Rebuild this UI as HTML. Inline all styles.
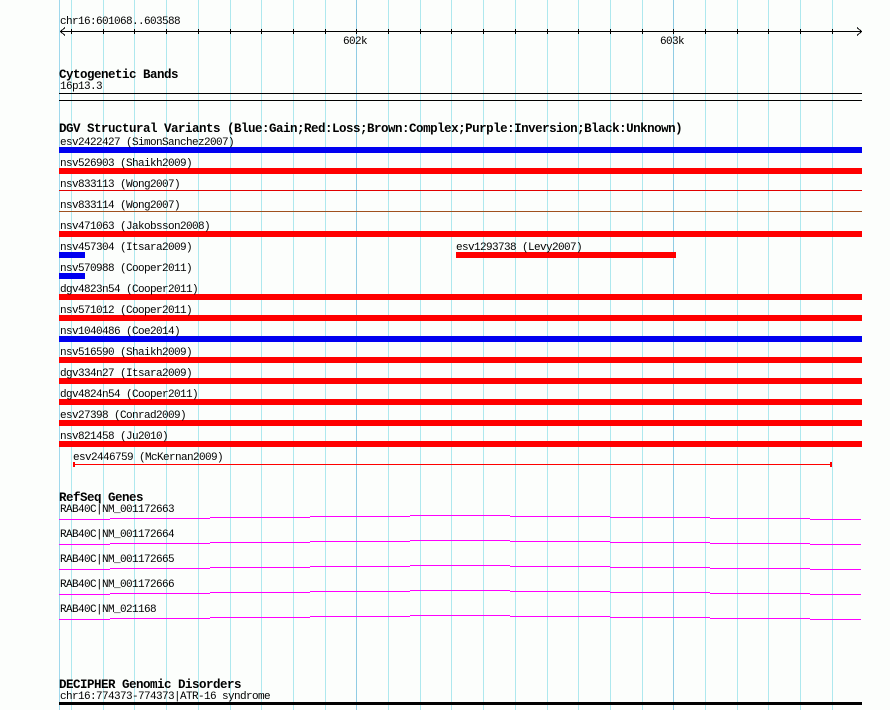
<!DOCTYPE html>
<html><head><meta charset="utf-8"><style>
html,body{margin:0;padding:0;background:#fcfefc;}
body{width:890px;height:710px;position:relative;overflow:hidden;font-family:"Liberation Mono",monospace;}
.t{position:absolute;font-size:11px;line-height:10px;color:#000;white-space:pre;letter-spacing:-0.6px;margin-top:2px;}
.b{position:absolute;font-size:12.5px;line-height:12px;font-weight:bold;color:#000;white-space:pre;letter-spacing:-0.5px;margin-top:2px;}
</style></head><body>
<svg width="890" height="710" style="position:absolute;left:0;top:0" shape-rendering="crispEdges">
<g id="grid" stroke="#aee8ee" stroke-width="1">
<line x1="59.5" y1="0" x2="59.5" y2="710" stroke="#a0d8ec"/>
</g>
<g stroke="#000" stroke-width="1">
<line x1="60" y1="31.5" x2="862" y2="31.5"/>
<polyline points="65,27.5 60.5,31.5 65,35.5" fill="none"/>
<polyline points="857,27.5 861.5,31.5 857,35.5" fill="none"/>
<line x1="59" y1="93.5" x2="862" y2="93.5"/>
<line x1="59" y1="100.5" x2="862" y2="100.5"/>
</g>
<g id="ticks" stroke="#000"></g>
<g id="genes" fill="none" stroke="#f0f" stroke-width="1"></g>
<g>
<rect x="59" y="147" width="803" height="6" fill="#0000f0"/>
<rect x="59" y="168" width="803" height="6" fill="#f00"/>
<rect x="59" y="190" width="803" height="1" fill="#e00000"/>
<rect x="59" y="211" width="803" height="1" fill="#a0501e"/>
<rect x="59" y="231" width="803" height="6" fill="#f00"/>
<rect x="59" y="252" width="26" height="6" fill="#0000f0"/>
<rect x="456" y="252" width="220" height="6" fill="#f00"/>
<rect x="59" y="273" width="26" height="6" fill="#0000f0"/>
<rect x="59" y="294" width="803" height="6" fill="#f00"/>
<rect x="59" y="315" width="803" height="6" fill="#f00"/>
<rect x="59" y="336" width="803" height="6" fill="#0000f0"/>
<rect x="59" y="357" width="803" height="6" fill="#f00"/>
<rect x="59" y="378" width="803" height="6" fill="#f00"/>
<rect x="59" y="399" width="803" height="6" fill="#f00"/>
<rect x="59" y="420" width="803" height="6" fill="#f00"/>
<rect x="59" y="441" width="803" height="6" fill="#f00"/>
<rect x="73" y="464" width="758" height="1" fill="#f00"/>
<rect x="73" y="462" width="2" height="5" fill="#f00"/>
<rect x="830" y="462" width="2" height="5" fill="#f00"/>
<rect x="59" y="702" width="803" height="3" fill="#000"/>
</g>
</svg>
<div class="t" style="left:60px;top:15px">chr16:601068..603588</div>
<div class="t" style="left:343px;top:35px">602k</div>
<div class="t" style="left:660px;top:35px">603k</div>
<div class="b" style="left:59px;top:67px">Cytogenetic Bands</div>
<div class="t" style="left:60px;top:80px">16p13.3</div>
<div class="b" style="left:59px;top:121px">DGV Structural Variants (Blue:Gain;Red:Loss;Brown:Complex;Purple:Inversion;Black:Unknown)</div>
<div class="t" style="left:60px;top:136px">esv2422427 (SimonSanchez2007)</div>
<div class="t" style="left:60px;top:157px">nsv526903 (Shaikh2009)</div>
<div class="t" style="left:60px;top:178px">nsv833113 (Wong2007)</div>
<div class="t" style="left:60px;top:199px">nsv833114 (Wong2007)</div>
<div class="t" style="left:60px;top:220px">nsv471063 (Jakobsson2008)</div>
<div class="t" style="left:60px;top:241px">nsv457304 (Itsara2009)</div>
<div class="t" style="left:456px;top:241px">esv1293738 (Levy2007)</div>
<div class="t" style="left:60px;top:262px">nsv570988 (Cooper2011)</div>
<div class="t" style="left:60px;top:283px">dgv4823n54 (Cooper2011)</div>
<div class="t" style="left:60px;top:304px">nsv571012 (Cooper2011)</div>
<div class="t" style="left:60px;top:325px">nsv1040486 (Coe2014)</div>
<div class="t" style="left:60px;top:346px">nsv516590 (Shaikh2009)</div>
<div class="t" style="left:60px;top:367px">dgv334n27 (Itsara2009)</div>
<div class="t" style="left:60px;top:388px">dgv4824n54 (Cooper2011)</div>
<div class="t" style="left:60px;top:409px">esv27398 (Conrad2009)</div>
<div class="t" style="left:60px;top:430px">nsv821458 (Ju2010)</div>
<div class="t" style="left:73px;top:451px">esv2446759 (McKernan2009)</div>
<div class="b" style="left:59px;top:490px">RefSeq Genes</div>
<div class="t" style="left:60px;top:503px">RAB40C|NM_001172663</div>
<div class="t" style="left:60px;top:528px">RAB40C|NM_001172664</div>
<div class="t" style="left:60px;top:553px">RAB40C|NM_001172665</div>
<div class="t" style="left:60px;top:578px">RAB40C|NM_001172666</div>
<div class="t" style="left:60px;top:603px">RAB40C|NM_021168</div>
<div class="b" style="left:59px;top:677px">DECIPHER Genomic Disorders</div>
<div class="t" style="left:60px;top:690px">chr16:774373-774373|ATR-16 syndrome</div>
<script>
(function(){
var ns="http://www.w3.org/2000/svg";
var g=document.getElementById("grid"),tk=document.getElementById("ticks"),ge=document.getElementById("genes");
for(var k=-9;k<=15;k++){
 var x=Math.round(356.3+k*31.7)+0.5;
 var l=document.createElementNS(ns,"line");
 l.setAttribute("x1",x);l.setAttribute("x2",x);l.setAttribute("y1",0);l.setAttribute("y2",710);
 if(k==0||k==10)l.setAttribute("stroke","#90cce4");
 g.appendChild(l);
 var t=document.createElementNS(ns,"line");
 t.setAttribute("x1",x);t.setAttribute("x2",x);t.setAttribute("y1",29);t.setAttribute("y2",34);
 tk.appendChild(t);
}
var xs=[59,110,210,310,410,510,610,710,810,861];
var dy=[0,-1,-2,-3,-4,-3,-2,-1,0];
for(var i=0;i<5;i++){
 var base=519+i*25;
 for(var j=0;j<9;j++){
  var l2=document.createElementNS(ns,"line");
  var y=base+dy[j]+0.5;
  l2.setAttribute("x1",xs[j]);l2.setAttribute("x2",xs[j+1]);l2.setAttribute("y1",y);l2.setAttribute("y2",y);
  ge.appendChild(l2);
 }
}
})();
</script>
</body></html>
